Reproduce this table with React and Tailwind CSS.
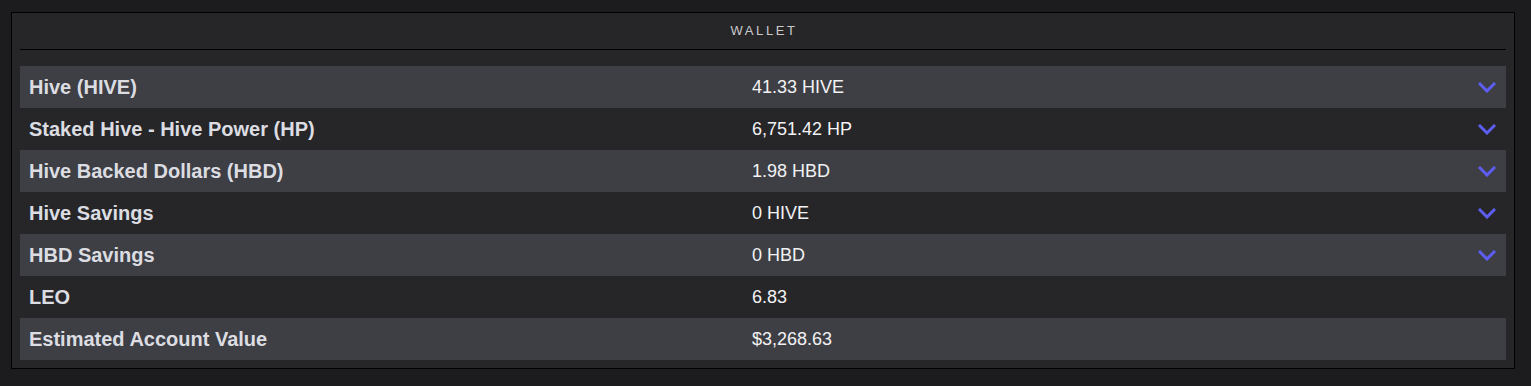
import React from "react";

const rows = [
  { label: "Hive (HIVE)", value: "41.33 HIVE", chevron: true },
  { label: "Staked Hive - Hive Power (HP)", value: "6,751.42 HP", chevron: true },
  { label: "Hive Backed Dollars (HBD)", value: "1.98 HBD", chevron: true },
  { label: "Hive Savings", value: "0 HIVE", chevron: true },
  { label: "HBD Savings", value: "0 HBD", chevron: true },
  { label: "LEO", value: "6.83", chevron: false },
  { label: "Estimated Account Value", value: "$3,268.63", chevron: false },
];

function Chevron() {
  return (
    <svg width="18" height="11" viewBox="0 0 18 11" fill="none">
      <path d="M2 2 L9 9 L16 2" stroke="#5d5df2" strokeWidth="3" strokeLinecap="square" strokeLinejoin="miter" />
    </svg>
  );
}

export default function App() {
  return (
    <div
      className="w-[1531px] h-[386px] bg-[#1c1c1e] pt-[12px] pl-[11px]"
      style={{ fontFamily: '"Liberation Sans", Arial, sans-serif' }}
    >
      <div className="w-[1504px] h-[357px] border border-black bg-[#262628] px-[8px]">
        <div className="h-[37px] border-b border-black flex items-center justify-center text-[13px] tracking-[0.2em] pl-[2px] text-[#c9c9cb]">
          WALLET
        </div>
        <div className="mt-[16px] flex flex-col">
          {rows.map((r, i) => (
            <div
              key={r.label}
              className={`h-[42px] grid grid-cols-[723px_1fr_40px] items-center pl-[9px] ${
                i % 2 === 0 ? "bg-[#3e3f44]" : "bg-transparent"
              }`}
            >
              <div className="text-[20px] font-bold text-[#dcdde2]">{r.label}</div>
              <div className="text-[18px] text-[#f2f2f4]">{r.value}</div>
              <div className="flex items-center justify-end pr-[10px]">
                {r.chevron ? <Chevron /> : null}
              </div>
            </div>
          ))}
        </div>
      </div>
    </div>
  );
}
